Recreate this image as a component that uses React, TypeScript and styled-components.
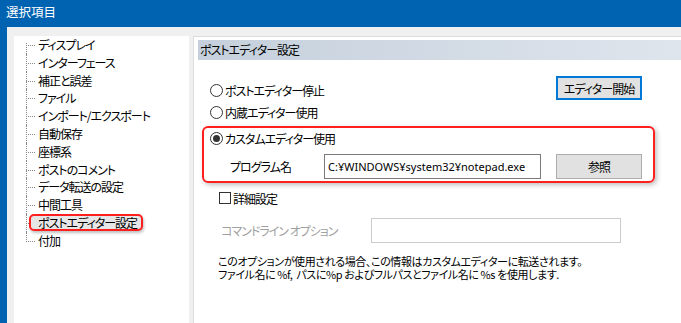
import React from 'react';
import styled, { createGlobalStyle } from 'styled-components';

const GlobalStyle = createGlobalStyle`
    html, body {
        margin: 0;
        padding: 0;
        background: #f0f0f0;
    }
    body {
        font-family: 'Noto Sans CJK JP', 'Noto Sans', sans-serif;
        font-size: 12px;
        letter-spacing: -1px;
        color: #000;
        font-feature-settings: 'palt' 1;
    }
`;

const Window = styled.div`
    width: 681px;
    height: 323px;
    display: flex;
    flex-direction: column;
    overflow: hidden;
`;

const TitleBar = styled.div`
    height: 27px;
    flex: none;
    background: #0063b1;
    color: #fff;
    padding-left: 6px;
    line-height: 24px;
    font-size: 12.5px;
    letter-spacing: 0;
`;

const Body = styled.div`
    flex: 1;
    display: flex;
    gap: 4px;
    background: #f0f0f0;
    border-left: 7px solid #0063b1;
    padding: 9px 0 0 7px;
    min-height: 0;
`;

const Tree = styled.ul`
    width: 175px;
    flex: none;
    margin: 0;
    padding: 0 0 0 12px;
    list-style: none;
    background: #fff;
    box-sizing: border-box;
`;

const TreeItem = styled.li<{ $first?: boolean; $last?: boolean }>`
    position: relative;
    height: 17.8px;
    line-height: 17.8px;
    padding-left: 12px;
    white-space: nowrap;

    &::before {
        content: '';
        position: absolute;
        left: 0;
        width: 9px;
        top: 9px;
        border-top: 1px dotted #8a8a8a;
    }

    &::after {
        content: '';
        position: absolute;
        left: 0;
        top: ${p => (p.$first ? '7px' : '0')};
        bottom: ${p => (p.$last ? '8px' : '0')};
        border-left: 1px dotted #8a8a8a;
    }
`;

const Selected = styled.span`
    display: inline-block;
    position: relative;
    z-index: 1;
    margin-left: -9px;
    padding: 0 4px 0 7px;
    height: 17px;
    line-height: 14px;
    border: 2px solid #ff1f1f;
    border-radius: 5px;
    background: #e6e6e6;
    box-sizing: border-box;
    box-shadow: 1px 2px 3px rgba(0, 0, 0, 0.25);
`;

const Panel = styled.div`
    flex: 1;
    background: #fff;
    border-left: 1px solid #dcdcdc;
    border-top: 1px solid #dcdcdc;
    padding-top: 3px;
`;

const Header = styled.div`
    margin-left: 4px;
    height: 20px;
    line-height: 20px;
    padding-left: 2px;
    background: linear-gradient(to right, #c5d0dc, #dfe5ed);
`;

const Content = styled.div`
    padding-left: 16px;
`;

const TopRow = styled.div`
    width: 432px;
    height: 24px;
    margin-top: 16px;
    display: flex;
    justify-content: space-between;
`;

const RadioRow = styled.label<{ $gap?: number }>`
    display: flex;
    align-items: center;
    gap: 2px;
    height: 20px;
    align-self: flex-end;
    margin-top: ${p => p.$gap ?? 0}px;
`;

const RadioCircle = styled.span<{ $checked?: boolean }>`
    width: 13px;
    height: 13px;
    border: 1px solid #333;
    border-radius: 50%;
    box-sizing: border-box;
    display: flex;
    align-items: center;
    justify-content: center;

    &::after {
        content: '';
        width: 7px;
        height: 7px;
        border-radius: 50%;
        background: ${p => (p.$checked ? '#333' : 'transparent')};
    }
`;

const Button = styled.div<{ $focused?: boolean; $gap?: number }>`
    width: 86px;
    height: ${p => (p.$focused ? '24px' : '25px')};
    margin-left: ${p => p.$gap ?? 0}px;
    box-sizing: border-box;
    background: #e1e1e1;
    border: ${p => (p.$focused ? '2px solid #0078d7' : '1px solid #adadad')};
    display: flex;
    align-items: center;
    justify-content: center;
    flex: none;
`;

const CustomBox = styled.div`
    width: 453px;
    margin: 4px 0 0 -8px;
    padding: 0 11px 2px 6px;
    box-sizing: border-box;
    border: 2px solid #ff1f1f;
    border-radius: 6px;
    box-shadow: 2px 2px 5px rgba(0, 0, 0, 0.25);
`;

const FieldRow = styled.div`
    display: flex;
    align-items: center;
    margin-top: 6px;
    height: 25px;
`;

const FieldLabel = styled.span<{ $width: number; $indent: number; $disabled?: boolean }>`
    width: ${p => p.$width}px;
    margin-left: ${p => p.$indent}px;
    flex: none;
    white-space: pre;
    color: ${p => (p.$disabled ? '#a0a0a0' : '#000')};
`;

const TextBox = styled.div<{ $width: number; $disabled?: boolean }>`
    width: ${p => p.$width}px;
    height: 25px;
    box-sizing: border-box;
    border: 1px solid ${p => (p.$disabled ? '#cccccc' : '#7a7a7a')};
    background: #fff;
    padding-left: 3px;
    line-height: 23px;
    font-family: 'Noto Sans', sans-serif;
    font-size: 11px;
    letter-spacing: 0;
    flex: none;
`;

const CheckRow = styled.label`
    display: flex;
    align-items: center;
    gap: 2px;
    height: 20px;
    margin: 5px 0 0 9px;
`;

const CheckBox = styled.span`
    width: 12px;
    height: 12px;
    border: 1px solid #333;
    box-sizing: border-box;
    background: #fff;
`;

const CmdRow = styled.div`
    display: flex;
    align-items: center;
    margin-top: 10px;
`;

const Info = styled.div`
    margin: 12px 0 0 8px;
    font-size: 11px;
    letter-spacing: -0.4px;
`;

const InfoLine = styled.div`
    height: 13px;
    line-height: 13px;
    white-space: nowrap;
`;

const treeItems = [
    'ディスプレイ',
    'インターフェース',
    '補正と誤差',
    'ファイル',
    'インポート/エクスポート',
    '自動保存',
    '座標系',
    'ポストのコメント',
    'データ転送の設定',
    '中間工具',
    'ポストエディター設定',
    '付加'
];

const SELECTED = 'ポストエディター設定';

const App: React.FC = () => {
    return (
        <>
            <GlobalStyle />
            <Window>
                <TitleBar>選択項目</TitleBar>
                <Body>
                    <Tree>
                        {treeItems.map((item, index) => (
                            <TreeItem
                                key={item}
                                $first={index === 0}
                                $last={index === treeItems.length - 1}
                            >
                                {item === SELECTED ? <Selected>{item}</Selected> : item}
                            </TreeItem>
                        ))}
                    </Tree>
                    <Panel>
                        <Header>ポストエディター設定</Header>
                        <Content>
                            <TopRow>
                                <RadioRow>
                                    <RadioCircle />
                                    ポストエディター停止
                                </RadioRow>
                                <Button $focused>エディター開始</Button>
                            </TopRow>
                            <RadioRow $gap={2}>
                                <RadioCircle />
                                内蔵エディター使用
                            </RadioRow>
                            <CustomBox>
                                <RadioRow>
                                    <RadioCircle $checked />
                                    カスタムエディター使用
                                </RadioRow>
                                <FieldRow>
                                    <FieldLabel $width={94} $indent={20}>プログラム名</FieldLabel>
                                    <TextBox $width={217}>C:¥WINDOWS¥system32¥notepad.exe</TextBox>
                                    <Button $gap={15}>参照</Button>
                                </FieldRow>
                            </CustomBox>
                            <CheckRow>
                                <CheckBox />
                                詳細設定
                            </CheckRow>
                            <CmdRow>
                                <FieldLabel $width={150} $indent={11} $disabled>
                                    {'コマンドライン オプション'}
                                </FieldLabel>
                                <TextBox $width={250} $disabled />
                            </CmdRow>
                            <Info>
                                <InfoLine>
                                    このオプションが使用される場合、この情報はカスタムエディターに転送されます。
                                </InfoLine>
                                <InfoLine>
                                    ファイル名に %f,&nbsp; パスに%p およびフルパスとファイル名に %s を使用します.
                                </InfoLine>
                            </Info>
                        </Content>
                    </Panel>
                </Body>
            </Window>
        </>
    );
};

export default App;
